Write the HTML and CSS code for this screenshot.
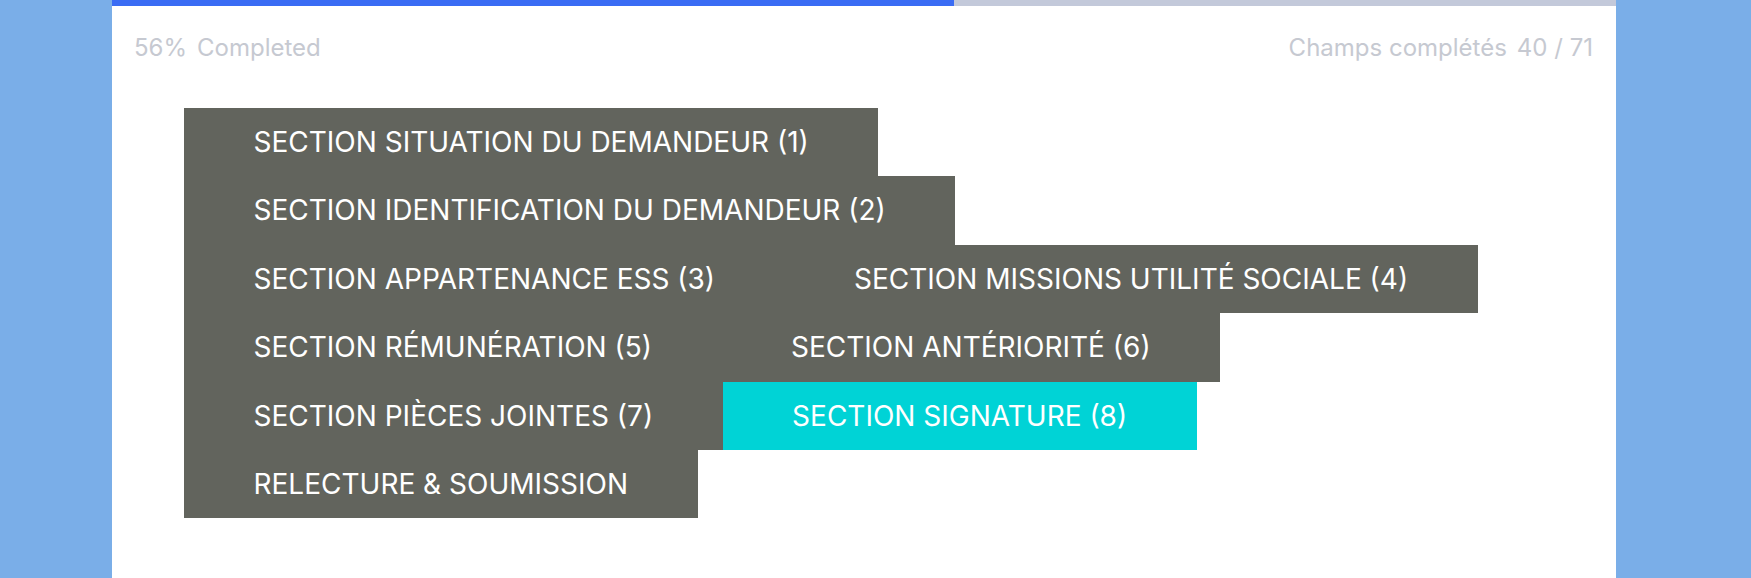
FILE: index.html
```html
<!DOCTYPE html>
<html lang="fr">
<head>
<meta charset="utf-8">
<title>Sections</title>
<link rel="stylesheet" href="styles.css">
</head>
<body>
<div class="panel">
  <div class="progress"><div class="progress-fill" style="width:56%"></div></div>
  <div class="stats">
    <span class="stat"><span>56%</span><span>Completed</span></span>
    <span class="stat"><span>Champs complétés</span><span>40 / 71</span></span>
  </div>
  <div class="sections">
    <a class="sec">SECTION SITUATION DU DEMANDEUR (1)</a>
    <a class="sec">SECTION IDENTIFICATION DU DEMANDEUR (2)</a>
    <a class="sec">SECTION APPARTENANCE ESS (3)</a>
    <a class="sec">SECTION MISSIONS UTILITÉ SOCIALE (4)</a>
    <a class="sec">SECTION RÉMUNÉRATION (5)</a>
    <a class="sec">SECTION ANTÉRIORITÉ (6)</a>
    <a class="sec">SECTION PIÈCES JOINTES (7)</a>
    <a class="sec active">SECTION SIGNATURE (8)</a>
    <a class="sec">RELECTURE &amp; SOUMISSION</a>
  </div>
</div>
</body>
</html>
```
FILE: styles.css
```css
html, body {
  margin: 0;
  padding: 0;
  height: 100%;
  overflow: hidden;
}
body {
  background: #7aaee8;
  font-family: Inter, "Liberation Sans", sans-serif;
}
.panel {
  margin-left: 112px;
  width: 1504px;
  min-height: 100%;
  background: #ffffff;
}
.progress {
  height: 6px;
  background: #c3c9da;
}
.progress-fill {
  height: 100%;
  background: #3a6cf4;
}
.stats {
  display: flex;
  justify-content: space-between;
  padding: 0 23px 0 22px;
  height: 82px;
  align-items: center;
  font-size: 24px;
  color: #c6c9d1;
}
.stat {
  display: flex;
  gap: 10px;
}
.sections {
  display: flex;
  flex-wrap: wrap;
  width: 1330px;
  margin: 20px 0 0 72px;
}
.sec {
  display: block;
  height: 68.4px;
  line-height: 68.4px;
  padding: 0 69.5px;
  background: #62645d;
  color: #ffffff;
  font-size: 28px;
  white-space: nowrap;
}
.sec.active {
  background: #00d3d6;
}
```
